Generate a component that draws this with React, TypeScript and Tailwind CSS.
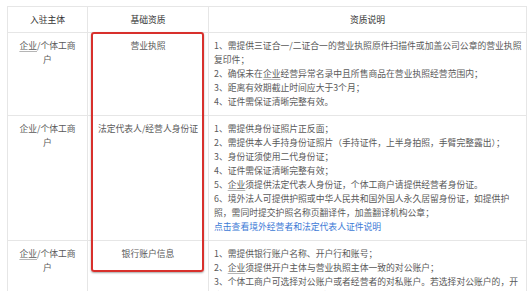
const rows = [
  {
    subject: true,
    base: '营业执照',
    lines: [
      <>1、需提供三证合一/二证合一的营业执照原件扫描件或加盖公司公章的营业执照复印件；</>,
      <>2、确保未在<U>企业</U>经营异常名录中且所售商品在营业执照经营范围内；</>,
      <>3、距离有效期截止时间应大于3个月；</>,
      <>4、证件需保证清晰完整有效。</>,
    ],
  },
  {
    subject: false,
    base: '法定代表人/经营人身份证',
    lines: [
      <>1、需提供身份证照片正反面；</>,
      <>2、需提供本人手持身份证照片（手持证件，上半身拍照，手臂完整露出）；</>,
      <>3、身份证须使用二代身份证；</>,
      <>4、证件需保证清晰完整有效；</>,
      <>5、<U>企业</U>须提供法定代表人身份证，个体工商户请提供经营者身份证。</>,
      <>6、境外法人可提供护照或中华人民共和国外国人永久居留身份证，如提供护照，需同时提交护照名称页翻译件，加盖翻译机构公章；</>,
      <span className="text-[#3d7ad6]">点击查看境外经营者和法定代表人证件说明</span>,
    ],
  },
  {
    subject: true,
    base: '银行账户信息',
    lines: [
      <>1、需提供银行账户名称、开户行和账号；</>,
      <>2、<U>企业</U>须提供开户主体与营业执照主体一致的对公账户；</>,
      <>3、个体工商户可选择对公账户或者经营者的对私账户。若选择对公账户的，开户主体需与营业执照主体一致；</>,
    ],
  },
];

function U({ children }: { children: React.ReactNode }) {
  return <span className="underline decoration-[#b5b5b5] underline-offset-2">{children}</span>;
}

export default function App() {
  return (
    <div className="relative w-[532px] h-[291px] overflow-hidden bg-white pt-[6px] pl-[7px] font-['Noto_Sans_CJK_SC','Liberation_Sans',sans-serif] text-[8.8px] leading-[14px] text-[#5a5a5a]">
      <table className="table-fixed border-collapse w-[519px]">
        <colgroup>
          <col className="w-[80px]" />
          <col className="w-[121px]" />
          <col className="w-[318px]" />
        </colgroup>
        <thead>
          <tr className="h-[26px] text-[#333]">
            <th className="border border-[#e6e6e6] font-normal">入驻主体</th>
            <th className="border border-[#e6e6e6] font-normal">基础资质</th>
            <th className="border border-[#e6e6e6] font-normal">资质说明</th>
          </tr>
        </thead>
        <tbody>
          {rows.map((row, i) => (
            <tr key={i}>
              <td className="border border-[#e6e6e6] align-top text-center px-[8px] py-[6px]">
                {row.subject ? <U>企业</U> : '企业'}/个体工商户
              </td>
              <td className="border border-[#e6e6e6] align-top text-center px-[4px] py-[6px] whitespace-nowrap">
                {row.base}
              </td>
              <td className="border border-[#e6e6e6] align-top pl-[5px] pr-[3px] py-[6px]">
                {row.lines.map((l, j) => (
                  <div key={j}>{l}</div>
                ))}
              </td>
            </tr>
          ))}
        </tbody>
      </table>
      <div className="absolute left-[91px] top-[32px] w-[113px] h-[240px] rounded-[3px] border-2 border-[#d8302c] shadow-[0_1px_2px_rgba(0,0,0,0.35)]" />
    </div>
  );
}
